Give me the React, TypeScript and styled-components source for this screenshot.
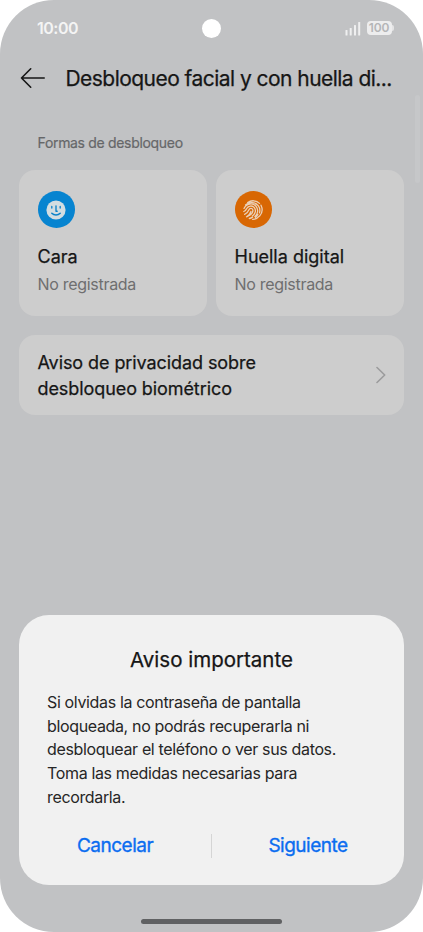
import React from "react";
import styled, { createGlobalStyle } from "styled-components";

const GlobalStyle = createGlobalStyle`
  * { box-sizing: border-box; }
  body { margin: 0; background: #fff; }
  button { border: 0; background: none; padding: 0; font: inherit; color: inherit; }
`;

const Phone = styled.div`
  position: relative;
  width: 423px;
  height: 932px;
  border-radius: 54px;
  overflow: hidden;
  background: #c1c2c4;
  color: #161616;
  font-family: Inter, "Liberation Sans", sans-serif;
  display: flex;
  flex-direction: column;
`;

const StatusBar = styled.div`
  height: 56px;
  padding: 0 30px 0 37px;
  display: grid;
  grid-template-columns: 1fr 20px 1fr;
  align-items: center;
  flex: none;
`;

const Clock = styled.span`
  color: #f4f4f4;
  font-size: 16px;
  font-weight: 600;
  letter-spacing: -0.5px;
`;

const Camera = styled.span`
  width: 19px;
  height: 19px;
  border-radius: 50%;
  background: #fff;
  margin: 1px 0 0 -3px;
`;

const StatusIcons = styled.div`
  display: flex;
  justify-content: flex-end;
  align-items: center;
  gap: 6px;
`;

const Battery = styled.span`
  position: relative;
  width: 25px;
  height: 14px;
  border-radius: 4px;
  background: #ededee;
  color: #b4b5b7;
  font-size: 12px;
  font-weight: 600;
  line-height: 14px;
  text-align: center;
  letter-spacing: -0.1px;
  margin-right: 1.5px;
  &::after {
    content: "";
    position: absolute;
    right: -2px;
    top: 4px;
    width: 2px;
    height: 6px;
    border-radius: 0 2px 2px 0;
    background: #e4e4e5;
  }
`;

const Header = styled.header`
  height: 44px;
  padding-left: 20px;
  display: flex;
  align-items: center;
  flex: none;
`;

const BackButton = styled.button`
  display: flex;
  width: 45.5px;
`;

const Title = styled.h1`
  margin: 0;
  padding-top: 2px;
  font-size: 21px;
  font-weight: 400;
  -webkit-text-stroke: 0.25px currentColor;
  line-height: 28px;
  letter-spacing: -0.54px;
  white-space: nowrap;
`;

const Content = styled.main`
  padding: 32px 19px 0;
  display: flex;
  flex-direction: column;
`;

const SectionLabel = styled.h2`
  margin: 0 0 17px;
  padding-left: 18.5px;
  color: #666769;
  font-size: 14px;
  font-weight: 400;
  -webkit-text-stroke: 0.2px currentColor;
  line-height: 21px;
  letter-spacing: -0.32px;
`;

const MethodGrid = styled.div`
  display: grid;
  grid-template-columns: 188px 188px;
  gap: 9px;
`;

const MethodCard = styled.section`
  height: 145.5px;
  padding: 21px 18.5px;
  border-radius: 16px;
  background: #cdcdcd;
  display: flex;
  flex-direction: column;
`;

const IconDisc = styled.span<{ $color: string }>`
  width: 37.5px;
  height: 37.5px;
  border-radius: 50%;
  background: ${({ $color }) => $color};
  display: flex;
  align-items: center;
  justify-content: center;
`;

const MethodName = styled.h3`
  margin: 15.5px 0 0;
  font-size: 18px;
  font-weight: 400;
  -webkit-text-stroke: 0.25px currentColor;
  line-height: 26px;
  letter-spacing: 0px;
`;

const MethodState = styled.p`
  margin: 3px 0 0;
  color: #6f6f70;
  font-size: 16px;
  line-height: 22px;
  letter-spacing: -0.3px;
`;

const NoticeRow = styled.button`
  margin-top: 19.5px;
  height: 79.5px;
  padding: 0 18.5px;
  border-radius: 16px;
  background: #cdcdcd;
  display: flex;
  align-items: center;
  justify-content: space-between;
  text-align: left;
`;

const NoticeText = styled.span`
  padding-top: 2px;
  font-size: 18px;
  font-weight: 400;
  -webkit-text-stroke: 0.25px currentColor;
  line-height: 26px;
  letter-spacing: -0.08px;
`;

const ScrollThumb = styled.span`
  position: absolute;
  top: 95px;
  right: 3px;
  width: 5px;
  height: 88px;
  border-radius: 3px;
  background: #c6c7c9;
`;

const Dialog = styled.section`
  margin: auto 19px 34px;
  height: 270px;
  border-radius: 30px;
  background: #f1f1f1;
  display: flex;
  flex-direction: column;
`;

const DialogTitle = styled.h2`
  margin: 31px 0 0;
  text-align: center;
  font-size: 20.5px;
  font-weight: 400;
  -webkit-text-stroke: 0.25px currentColor;
  line-height: 28px;
  letter-spacing: 0px;
`;

const DialogBody = styled.p`
  margin: 17px 28px 0;
  color: #262626;
  font-size: 16px;
  line-height: 23.7px;
  letter-spacing: -0.35px;
  white-space: nowrap;
`;

const Actions = styled.div`
  margin-top: 22px;
  display: grid;
  grid-template-columns: 1fr 1px 1fr;
  align-items: center;
  height: 28px;
`;

const Action = styled.button`
  color: #0b6df0;
  font-size: 19px;
  font-weight: 400;
  -webkit-text-stroke: 0.35px currentColor;
  line-height: 28px;
  letter-spacing: -0.5px;
`;

const Divider = styled.span`
  height: 24px;
  background: #d5d5d5;
`;

const HomeBar = styled.span`
  width: 141px;
  height: 5px;
  margin: 0 auto 8px;
  border-radius: 3px;
  background: #606163;
  flex: none;
  align-self: center;
`;

const SignalIcon = () => (
  <svg width="16" height="15" viewBox="0 0 16 15" fill="#efeff0">
    <rect x="0.5" y="9" width="2" height="5.5" rx=".6" />
    <rect x="4.7" y="7" width="2" height="7.5" rx=".6" />
    <rect x="9" y="4" width="2" height="10.5" rx=".6" />
    <rect x="13.2" y="1" width="2" height="13.5" rx=".6" />
  </svg>
);

const BackIcon = () => (
  <svg width="26" height="22" viewBox="0 0 26 22" fill="none" stroke="#161616" strokeWidth="1.6" strokeLinecap="round" strokeLinejoin="round">
    <path d="M10.7 1.8 1.5 11l9.2 9.2M1.5 11H24.2" />
  </svg>
);

const FaceIcon = () => (
  <svg width="20" height="20" viewBox="0 0 20 20" fill="none" stroke="#0c82c9" strokeLinecap="round">
    <circle cx="10" cy="10" r="9.6" fill="#d3dde1" stroke="none" />
    <path d="M5.8 6.4v1.6M14.2 6.4v1.6M10 5.8v5.4h1.2" strokeWidth="1.35" strokeLinejoin="round" />
    <path d="M5.8 13.3c2.2 2.2 6.2 2.2 8.4 0" strokeWidth="1.5" />
  </svg>
);

const FingerprintIcon = () => (
  <svg width="20" height="20" viewBox="0 0 20 20" fill="none" stroke="#ead0b8" strokeWidth="1.3" strokeLinecap="round">
    <path d="M4.7 2.6a9 9 0 0 1 11.8.8M2.5 4.9C6 1.7 12.2 2 15.2 5.6c1.7 2.1 2 4.8 1.3 7.2M18 5.2c1.8 3.8 1.1 8.1-1.4 10.9M1 8.4c2.2-5 9-6 12.1-2 2.6 3.3 1.8 7.6-1.2 10.1M.8 11.5c1.7-.5 2.3-1.8 2.9-3 1.7-3 5.6-3.3 7.6-.9 2.2 2.8.9 6.5-2 8.4M1.6 14.3c2.4-.7 3.4-2.5 4.2-4.4 1-2.3 3.8-2 4.1.1.2 2.1-1.4 4.1-3.5 5.4M3.5 16.8c2.2-.8 3.7-2.9 4.4-5.3M6.3 18.5c1.2-.2 2.3-.7 3.3-1.4M9.6 19.3c2.8.1 5.1-1 6.6-3.1M14.9 14.3c-.5 1.2-1.3 2.2-2.3 3" />
  </svg>
);

const ChevronIcon = () => (
  <svg width="10" height="18" viewBox="0 0 10 18" fill="none" stroke="#9b9b9c" strokeWidth="1.6" strokeLinecap="round" strokeLinejoin="round">
    <path d="m1 1.5 7.7 7.5L1 16.5" />
  </svg>
);

const methods = [
  { name: "Cara", color: "#0784d0", Icon: FaceIcon },
  { name: "Huella digital", color: "#d86703", Icon: FingerprintIcon },
];

export default function App() {
  return (
    <>
      <GlobalStyle />
      <Phone>
        <StatusBar>
          <Clock>10:00</Clock>
          <Camera />
          <StatusIcons>
            <SignalIcon />
            <Battery>100</Battery>
          </StatusIcons>
        </StatusBar>
        <Header>
          <BackButton aria-label="Atrás"><BackIcon /></BackButton>
          <Title>Desbloqueo facial y con huella di...</Title>
        </Header>
        <Content>
          <SectionLabel>Formas de desbloqueo</SectionLabel>
          <MethodGrid>
            {methods.map(({ name, color, Icon }) => (
              <MethodCard key={name}>
                <IconDisc $color={color}><Icon /></IconDisc>
                <MethodName>{name}</MethodName>
                <MethodState>No registrada</MethodState>
              </MethodCard>
            ))}
          </MethodGrid>
          <NoticeRow>
            <NoticeText>Aviso de privacidad sobre<br />desbloqueo biométrico</NoticeText>
            <ChevronIcon />
          </NoticeRow>
        </Content>
        <ScrollThumb />
        <Dialog role="dialog">
          <DialogTitle>Aviso importante</DialogTitle>
          <DialogBody>
            Si olvidas la contraseña de pantalla<br />
            bloqueada, no podrás recuperarla ni<br />
            desbloquear el teléfono o ver sus datos.<br />
            Toma las medidas necesarias para<br />
            recordarla.
          </DialogBody>
          <Actions>
            <Action>Cancelar</Action>
            <Divider />
            <Action>Siguiente</Action>
          </Actions>
        </Dialog>
        <HomeBar />
      </Phone>
    </>
  );
}
